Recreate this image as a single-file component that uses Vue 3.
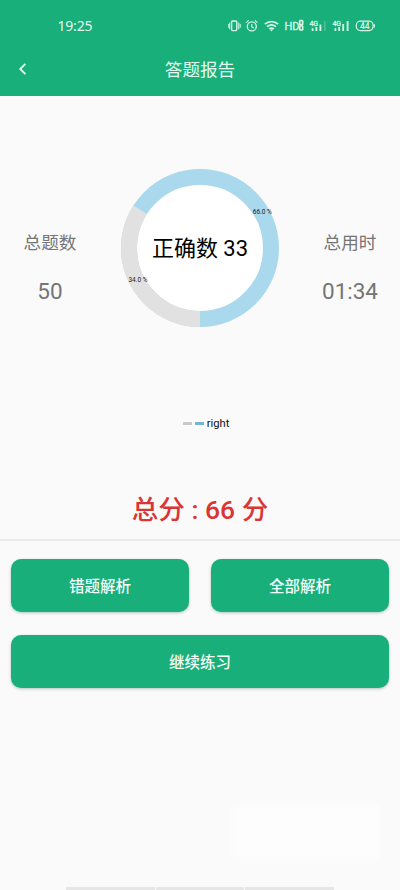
<script setup>
const radius = 71
const circumference = 2 * Math.PI * radius
const rightRatio = 0.66
const wrongArc = circumference * (1 - rightRatio)
const legend = [
  { label: '', tone: 'gray' },
  { label: 'right', tone: 'blue' },
]
</script>

<template>
  <div class="screen">
    <header class="top">
      <div class="status">
        <span class="clock">19:25</span>
        <svg class="icons" width="150" height="16" viewBox="0 0 150 16" fill="none" stroke="#d6f7e8" stroke-width="1.2">
          <rect x="3.6" y="3" width="5.2" height="9.6" rx="1" stroke-width="1.4" />
          <path d="M1.7 4.6v6.6M10.8 4.6v6.6M.3 6v3.8M12.2 6v3.8" stroke-width="1" />
          <circle cx="23.8" cy="8.4" r="4.5" stroke-width="1.3" />
          <path d="M23.8 6v3l2 1M18.2 4.6l2.5-2.2M29.4 4.6l-2.5-2.2" />
          <path d="M36.8 6.2q6.7-5.2 13.4 0M39 8.6q4.5-3.4 9 0M41.2 10.9q2.3-1.7 4.6 0" stroke-width="1.7" />
          <path d="M41.8 11.6h3.4l-1.7 2z" fill="#d6f7e8" stroke="none" />
          <text class="hd" x="56.6" y="12">HD</text>
          <rect x="71.7" y="2.6" width="3" height="4" rx=".6" stroke-width="1.6" />
          <rect x="71.7" y="8" width="3" height="4" rx=".6" stroke-width="1.6" />
          <text class="net" x="81.4" y="8">4G</text>
          <path d="M84.6 10.3v2.7M88.4 9v4M92.4 6.5v6.5" stroke-width="1.8" />
          <path d="M96.8 3v10" stroke-width="1.6" opacity=".25" />
          <text class="net" x="104.4" y="8">4G</text>
          <path d="M107.4 10.3v2.7M111.2 9v4M115.2 6v7M119.6 3v10" stroke-width="1.8" />
          <rect x="128.3" y="3.2" width="16.8" height="9.4" rx="4" />
          <path d="M146.3 6.2v3.4" stroke-width="1.3" />
          <text class="battery" x="136.8" y="11">44</text>
        </svg>
      </div>
      <div class="bar">
        <svg class="back" width="12" height="14" viewBox="0 0 12 14" fill="none" stroke="#e2fbf0" stroke-width="1.8">
          <path d="M8.4 1.8L3.2 7l5.2 5.2" />
        </svg>
        <h1>答题报告</h1>
      </div>
    </header>

    <main>
      <section class="stats">
        <div class="stat">
          <span class="name">总题数</span>
          <span class="value">50</span>
        </div>
        <svg class="donut" width="160" height="160" viewBox="0 0 160 160">
          <circle cx="80" cy="80" r="64" fill="#fff" />
          <g fill="none" stroke-width="16" transform="rotate(90 80 80)">
            <circle cx="80" cy="80" :r="radius" stroke="#aad8ec" />
            <circle cx="80" cy="80" :r="radius" stroke="#e1e1e1" :stroke-dasharray="`${wrongArc} ${circumference}`" />
          </g>
          <text class="center" x="80" y="87.5">正确数 33</text>
          <text class="percent" x="142.3" y="46.2">66.0 %</text>
          <text class="percent" x="18" y="114.4">34.0 %</text>
        </svg>
        <div class="stat">
          <span class="name">总用时</span>
          <span class="value">01:34</span>
        </div>
      </section>

      <div class="legend">
        <template v-for="item in legend" :key="item.tone">
          <i :class="item.tone"></i>
          <span v-if="item.label">{{ item.label }}</span>
        </template>
      </div>

      <p class="score">总分 : 66 分</p>

      <div class="actions">
        <button>错题解析</button>
        <button>全部解析</button>
        <button class="wide">继续练习</button>
      </div>
      <div class="patch"></div>
    </main>

    <footer><i></i><i></i><i></i></footer>
  </div>
</template>

<style>
body {
  margin: 0;
  background: #fafafa;
}
</style>

<style scoped>
.screen {
  box-sizing: border-box;
  width: 400px;
  height: 890px;
  overflow: hidden;
  display: flex;
  flex-direction: column;
  background: #fafafa;
  font-family: Roboto, "Noto Sans CJK SC", sans-serif;
}
.top {
  height: 96px;
  background: #18af7a;
  color: #e2fbf0;
  flex: none;
}
.status {
  display: flex;
  justify-content: space-between;
  align-items: center;
  height: 42px;
  padding: 9px 22px 0 57.5px;
  box-sizing: border-box;
}
.clock {
  font: 14px/16px "Noto Sans", sans-serif;
  letter-spacing: -0.2px;
}
.hd {
  font: 11px Roboto, sans-serif;
  letter-spacing: -0.3px;
  fill: #d6f7e8;
  stroke: #d6f7e8;
  stroke-width: 0.3px;
}
.net {
  font: 7px Roboto, sans-serif;
  fill: #d6f7e8;
  stroke: #d6f7e8;
  stroke-width: 0.3px;
}
.battery {
  font: 500 8.5px Roboto, sans-serif;
  text-anchor: middle;
  fill: #d6f7e8;
  stroke: none;
}
.bar {
  display: grid;
  grid-template-columns: 40px 1fr 40px;
  align-items: center;
  height: 54px;
}
.back {
  margin: 0 0 2px 17px;
}
h1 {
  margin: 0;
  padding-top: 1px;
  font-size: 17.6px;
  font-weight: 400;
  line-height: 54px;
  text-align: center;
}
main {
  flex: 1;
}
.stats {
  display: grid;
  grid-template-columns: 100px 160px 100px;
  justify-content: space-between;
  margin-top: 72px;
}
.stat {
  display: flex;
  flex-direction: column;
  align-items: center;
  padding-top: 61px;
  color: #757575;
}
.name {
  font-size: 17.6px;
  line-height: 28px;
}
.value {
  margin-top: 20px;
  font-size: 22.5px;
  line-height: 28px;
}
.center {
  font-size: 22px;
  text-anchor: middle;
  fill: #000;
}
.percent {
  font-size: 6.5px;
  text-anchor: middle;
  fill: #222;
}
.legend {
  display: flex;
  justify-content: center;
  align-items: center;
  gap: 3px;
  height: 16px;
  margin: 87px 0 0 12px;
  font-size: 11.2px;
  color: #111;
}
.legend i {
  width: 9px;
  height: 3px;
}
.gray {
  background: #c9c9c9;
}
.blue {
  background: #70b7d6;
}
.score {
  margin: 58px 0 0;
  height: 50px;
  border-bottom: 2px solid #e9e9e9;
  color: #d93535;
  font-size: 26.5px;
  font-weight: 500;
  line-height: 41px;
  text-align: center;
}
.actions {
  display: grid;
  grid-template-columns: 1fr 1fr;
  gap: 22.5px 22px;
  padding: 18px 11px 0;
}
button {
  height: 53px;
  padding: 0 0 1px;
  border: 0;
  border-radius: 10px;
  background: #18af7a;
  box-shadow: 0 1px 3px rgba(0, 80, 50, 0.3);
  color: #f2fff9;
  font: 500 15.5px Roboto, "Noto Sans CJK SC", sans-serif;
}
.wide {
  grid-column: span 2;
}
.patch {
  width: 142px;
  height: 46px;
  margin: 121.5px 0 0 236px;
  background: #fdfdfd;
  box-shadow: 0 0 5px 3px #fdfdfd;
}
footer {
  display: flex;
  justify-content: center;
  gap: 1px;
  height: 3px;
}
footer i {
  width: 88.5px;
  background: #e6e6e6;
}
</style>
